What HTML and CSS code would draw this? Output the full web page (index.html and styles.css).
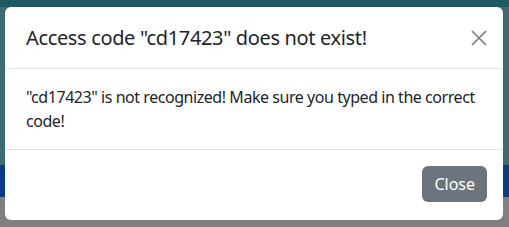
FILE: index.html
```html
<!DOCTYPE html>
<html lang="en">
<head>
    <meta charset="UTF-8">
    <title>Access code</title>
    <link rel="stylesheet" href="styles.css">
</head>
<body>
    <div class="modal">
        <div class="modal-header">
            <h5 class="modal-title">Access code "cd17423" does not exist!</h5>
            <button class="btn-close" aria-label="Close">
                <svg viewBox="0 0 16 16" width="16" height="16">
                    <path d="M1 1L15 15M15 1L1 15" stroke="currentColor" stroke-width="1.6" fill="none"/>
                </svg>
            </button>
        </div>
        <div class="modal-body">
            <p>"cd17423" is not recognized! Make sure you typed in the correct code!</p>
        </div>
        <div class="modal-footer">
            <button class="btn btn-secondary">Close</button>
        </div>
    </div>
</body>
</html>
```

FILE: styles.css
```css
* {
    box-sizing: border-box;
    margin: 0;
    padding: 0;
}

body {
    font-family: "Noto Sans", "Open Sans", sans-serif;
    color: #212529;
    height: 227px;
    overflow: hidden;
    padding: 7px 6px 0 5px;
    background:
        linear-gradient(#1e5a64 0, #1e5a64 7px, transparent 7px),
        linear-gradient(#3e6a71 0, #3e6a71 165px, #0b3b86 165px, #0b3b86 197px, #7f7f7f 197px);
}

.modal {
    background: #fff;
    border-radius: 6px;
    width: 498px;
    height: 213px;
    display: flex;
    flex-direction: column;
}

.modal-header {
    display: flex;
    align-items: center;
    justify-content: space-between;
    padding: 16px 16px 16px 21px;
    border-bottom: 1px solid #dee2e6;
    height: 62px;
}

.modal-title {
    font-size: 20px;
    font-weight: 400;
    line-height: 30px;
    letter-spacing: -0.35px;
}

.btn-close {
    border: none;
    background: none;
    color: #7b7b7b;
    width: 16px;
    height: 16px;
    display: flex;
}

.modal-body {
    padding: 16px 16px 16px 21px;
    font-size: 16px;
    line-height: 24px;
    letter-spacing: -0.45px;
    border-bottom: 1px solid #dee2e6;
}

.modal-footer {
    display: flex;
    justify-content: flex-end;
    padding: 16px;
}

.btn {
    font-family: inherit;
    font-size: 16px;
    line-height: 24px;
    padding: 6px 12px;
    border: none;
    border-radius: 6px;
}

.btn-secondary {
    background: #6c757d;
    color: #fff;
}
```
